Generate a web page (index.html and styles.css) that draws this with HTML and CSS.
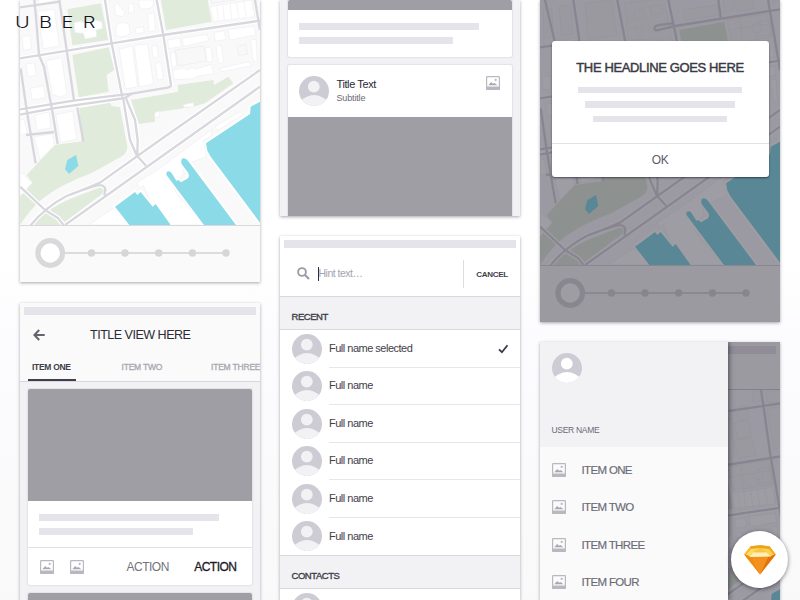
FILE: index.html
```html
<!DOCTYPE html>
<html lang="en">
<head>
<meta charset="utf-8">
<title>Uber wireframe kit</title>
<link rel="stylesheet" href="styles.css">
</head>
<body>
<svg class="defs" width="0" height="0" aria-hidden="true">
  <defs>
    <symbol id="avatar" viewBox="0 0 30 30">
      <clipPath id="round"><circle cx="15" cy="15" r="15"/></clipPath>
      <g clip-path="url(#round)">
        <rect width="30" height="30" fill="#cdccd4"/>
        <circle cx="14.8" cy="10.7" r="5.9" fill="currentColor"/>
        <path d="M0 26.500Q7 19 15 19T30 26.500V30H0Z" fill="currentColor"/>
      </g>
    </symbol>
    <symbol id="picture" viewBox="0 0 14 14">
      <rect x=".6" y=".6" width="12.800" height="12.500" rx=".6" fill="none" stroke="#b9b8c0" stroke-width="1.200"/>
      <rect x="0" y="10.500" width="14" height="3.500" rx=".8" fill="#b9b8c0"/>
      <path d="M2.300 9.200 5.200 6 7 7.800 8.400 6.900 11.500 9.200Z" fill="#a9a8b1"/>
      <circle cx="9.700" cy="3.900" r="1.100" fill="#b9b8c0"/>
    </symbol>
    <g id="city">
      <rect x="60" y="-300" width="720" height="980" fill="#f9f9fa"/>
      <g class="green">
        <path d="M202 28 303 10 325 120 217 136Z"/>
        <path d="M217 165 326 142 343 210 320 225 326 275 236 292Z"/>
        <path d="M478-30 613-55 635 65 498 90Z"/>
        <path d="M393 300 535 275 533 255 640 240 642 255 685 230 700 250 615 310 580 320 480 335 465 345V365L417 372Z"/>
        <path d="M238 325 330 308 335 318 360 322 382 440Q384 463 345 480L275 519Q190 550 135 590 95 620 60 675V590L97 548 80 525 165 435 245 424Z"/>
        <path d="M103 675Q135 630 210 597L290 566Q308 560 311 572 310 580 290 594L183 675Z"/>
      </g>
      <g class="block">
        <path d="M70-90 95-95 100-10 72-5ZM118-100 152-106 158-20 125-12ZM195-110 275-120 290-15 205 0ZM313-110 430-125 455-5 325 0Z" class="soft"/>
        <path d="M66 110 90 107 95 147 70 150ZM113 35 163 27 178 138 130 146ZM78 192 103 188 109 226 84 230ZM91 265 131 258 136 294 96 299ZM138 182 185 173 200 280 185 292 157 283ZM104 345 148 336 152 384 110 391ZM167 344 218 333 230 418 182 428ZM103 410 158 402 163 435 120 480ZM60 360 72 358 82 400 60 405ZM115 0 175-5 175 0 115 12Z"/>
        <path d="M222 68 245 63 248 68 285 60 305 65 308 85 288 90 290 110 255 117 250 100 225 98Z"/>
        <path d="M358 148 397 138 413 260 376 267ZM403 136 442 132 461 252 418 261ZM466 190 483 186 490 237 473 240ZM455 140 470 134 475 170 460 175Z"/>
        <path d="M416 0H460V15Q454 28 430 27L418 22ZM385 12 400 10 403 35 386 40ZM345 15 355 8 360 22 375 35 368 50 345 45ZM442 42 462 38 467 92 447 96ZM405 85 430 80 433 98 408 101Z"/>
        <path d="M350 75Q370 60 387 75L390 100Q375 115 350 108L347 90Z"/>
        <path d="M631 20 755 0 764 50 640 65ZM503 120 540 114 544 140 505 146ZM546 115 622 103 626 122 550 140ZM642 97 672 92 678 118 646 124ZM684 88 762 79 768 105 690 120ZM617 143 633 141 638 184 621 187ZM648 137 664 135 671 188 656 190ZM512 160 525 155 530 198 516 202ZM518 210 555 203 560 212 575 203 590 207 635 192 641 222 595 228 580 236 523 239ZM659 205 748 185 752 198 665 215ZM752 120 768 118 772 182 760 186Z"/>
        <path d="M526 150 611 138 618 183 535 198ZM712 138 738 134 743 162 716 167Z" class="soft"/>
        <path d="M650 15 655 62M668 12 673 60M690 8 695 58M710 6 716 54M731 2 738 52"/>
        <path d="M550 314 580 308 582 320 552 322ZM465 338 479 334V350L464 352ZM645 380 720 335 730 343 652 392Z"/>
        <path d="M480 505 620 400 638 388 630 410 610 422 620 470 565 490 550 473 540 480 552 520 532 545 505 510 495 515 530 580 608 675H515L467 610 458 620 430 555 420 565 410 548Z"/>
        <path d="M265 675 340 625 385 675ZM60 515 97 548 60 588Z"/>
        <path d="M642-240 675-246 682-205 650-198ZM692-290 715-295 720-260 697-255ZM640-190 660-200 685-194 690-152 650-145ZM640-140 693-148 704-95 650-86ZM735-285 780-292 780-255 742-250ZM738-235 780-241V-120L758-112ZM622-60 740-79 757-8 635 10ZM710-10 710-55 750-60 755-15ZM605-200 632-205 640-90 612-82ZM490-90 590-105 596-75 495-58Z" class="soft"/>
        <path d="M698-46 722-50 726-25 702-21ZM660-67 668 5M625-30 745-48" class="soft"/>
        <path d="M342-90 370-95 373-65 345-60ZM390-100 425-106 430-80 395-75ZM345-35 365-39 370-15 350-12Z" class="soft"/>
      </g>
      <g class="casing">
        <path d="M780 210 480 420 300 548Q275 560 200 588 130 625 85 680M780 260 195 675M370 298 390 420 410 466 438 497M378 295 405 360 413 420V466M60 560 135 630 175 655 190 675"/>
        <path d="M60 175 335 130 490 105 780 62M60 328 220 302 395 282M60 343 160 325 375 294M315 0 335 130 367 290M470 0 490 105 514 258"/>
      </g>
      <g class="water">
        <path d="M780 305 752 320 750 342 618 430 622 452 632 470 780 668Z"/>
        <path d="M345 620 405 576 412 585 422 576 458 620 467 612 512 675H388Z"/>
        <path d="M612 675 500 526Q496 514 507 514 513 516 517 523L529 542 535 540 543 547 564 535Q569 528 565 519L545 492Q540 475 552 475 560 476 566 485L708 675Z"/>
        <path d="M202 480 228 465 235 498 207 522 195 508Z"/>
      </g>
      <g class="road">
        <path d="M60 22 180 5M75-120 103 0 107 40 117 165 132 200 158 340 173 432M60-180 75-120M150-200 160-120 178 0 200 150 222 300M60 175 335 130 490 105 780 62M292-120 315 0 335 130 367 290"/>
        <path d="M445-120 470 0 490 105 513 255Q514 260 503 263L395 281 375 294M704-400 727-246 748-96 765 0 780 90"/>
        <path d="M60 328 220 302 395 281M60 344 160 325 375 294M62 205 80 330 100 450 107 490M78 405 162 396M232 322 250 425"/>
        <path d="M370 298 390 420 410 466 438 497M378 295 405 360 413 420 412 466M780 210 480 420 300 548Q275 560 200 588 135 622 90 678M780 260 195 675M240 573 285 558Q312 550 316 568L313 586M60 560 135 630 175 655 190 675"/>
        <path d="M465-42 780-92M595-120 602-68M623-228 780-251M465-42 415-30Q400-27 404-37 406-43 418-45L458-50"/>
      </g>
    </g>
  </defs>
</svg>

<div class="logo">UBER</div>

<main class="board">
  <div class="column">
    <section class="screen">
      <svg class="map" viewBox="60 0 720 675"><use href="#city"/></svg>
      <footer class="slider"><svg width="200" height="32" viewBox="0 0 200 32">
        <path d="M30 16H191" stroke="#dcdcde" stroke-width="2"/>
        <g fill="#d6d6d8"><circle cx="56.500" cy="16" r="3.700"/><circle cx="90" cy="16" r="3.700"/><circle cx="123.700" cy="16" r="3.700"/><circle cx="157.400" cy="16" r="3.700"/><circle cx="191" cy="16" r="3.700"/></g>
        <circle cx="15.200" cy="16" r="12.300" fill="#fff" stroke="#d9d9db" stroke-width="5.200"/>
      </svg></footer>
    </section>

    <section class="screen feed tabs-screen">
      <header class="topbar">
        <div class="status"></div>
        <div class="titlebar">
          <svg class="back" viewBox="0 0 12 12" fill="none" stroke="#64636f" stroke-width="2"><path d="M11.700 6H1.500M6.200 1 1.400 6 6.200 11"/></svg>
          <h1>TITLE VIEW HERE</h1>
        </div>
        <nav class="tabs"><a class="on"><span class="t1">ITEM ONE</span></a><a><span class="t2">ITEM TWO</span></a><a><span class="t3">ITEM THREE</span></a></nav>
      </header>
      <article class="card">
        <div class="photo"></div>
        <div class="copy"><i></i><i></i></div>
        <div class="actions">
          <svg class="pic"><use href="#picture"/></svg>
          <svg class="pic"><use href="#picture"/></svg>
          <span class="action first">ACTION</span>
          <span class="action strong">ACTION</span>
        </div>
      </article>
      <article class="card"><div class="photo"></div></article>
    </section>
  </div>

  <div class="column">
    <section class="screen feed feed-top">
      <article class="card cut"><div class="photo"></div><div class="copy"><i></i><i></i></div></article>
      <article class="card">
        <div class="person">
          <svg class="avatar"><use href="#avatar"/></svg>
          <div class="names"><b>Title Text</b><small>Subtitle</small></div>
          <svg class="pic"><use href="#picture"/></svg>
        </div>
        <div class="photo"></div>
      </article>
    </section>

    <section class="screen list">
      <div class="status"></div>
      <div class="search">
        <svg class="lens" viewBox="0 0 13 13" fill="none" stroke="#9d9ca4"><circle cx="5" cy="5" r="3.900" stroke-width="1.900"/><path d="M7.800 7.800 12 12" stroke-width="2.200"/></svg>
        <span class="hint"><span>Hint text…</span></span>
        <span class="cancel"><span>CANCEL</span></span>
      </div>
      <h2><span class="recent">RECENT</span></h2>
      <ul>
        <li><svg class="avatar"><use href="#avatar"/></svg><div><span class="sel">Full name selected</span><svg class="check" viewBox="0 0 11 10"><path d="M1 5.400 3.900 8.200 9.500 1.200" fill="none" stroke="#3a3944" stroke-width="1.800"/></svg></div></li>
        <li><svg class="avatar"><use href="#avatar"/></svg><div><span>Full name</span></div></li>
        <li><svg class="avatar"><use href="#avatar"/></svg><div><span>Full name</span></div></li>
        <li><svg class="avatar"><use href="#avatar"/></svg><div><span>Full name</span></div></li>
        <li><svg class="avatar"><use href="#avatar"/></svg><div><span>Full name</span></div></li>
        <li><svg class="avatar"><use href="#avatar"/></svg><div><span>Full name</span></div></li>
      </ul>
      <h2><span class="contacts">CONTACTS</span></h2>
      <ul><li><svg class="avatar"><use href="#avatar"/></svg><div></div></li></ul>
    </section>
  </div>

  <div class="column">
    <section class="screen modal-screen">
      <svg class="map tall" viewBox="60 -120 720 795"><use href="#city"/></svg>
      <footer class="slider"><svg width="200" height="32" viewBox="0 0 200 32">
        <path d="M30 16H191" stroke="#dcdcde" stroke-width="2"/>
        <g fill="#d6d6d8"><circle cx="56.500" cy="16" r="3.700"/><circle cx="90" cy="16" r="3.700"/><circle cx="123.700" cy="16" r="3.700"/><circle cx="157.400" cy="16" r="3.700"/><circle cx="191" cy="16" r="3.700"/></g>
        <circle cx="15.200" cy="16" r="12.300" fill="#fff" stroke="#d9d9db" stroke-width="5.200"/>
      </svg></footer>
      <div class="scrim"></div>
      <div class="dialog">
        <h3>THE HEADLINE GOES HERE</h3>
        <i></i><i></i><i></i>
        <button>OK</button>
      </div>
    </section>

    <section class="screen drawer-screen">
      <aside class="drawer">
        <div class="user"><svg class="avatar"><use href="#avatar"/></svg><span>USER NAME</span></div>
        <div class="entry"><svg class="pic"><use href="#picture"/></svg><span>ITEM ONE</span></div>
        <div class="entry"><svg class="pic"><use href="#picture"/></svg><span>ITEM TWO</span></div>
        <div class="entry"><svg class="pic"><use href="#picture"/></svg><span>ITEM THREE</span></div>
        <div class="entry"><svg class="pic"><use href="#picture"/></svg><span>ITEM FOUR</span></div>
      </aside>
      <div class="behind">
        <div class="behind-bar"><div class="behind-status"></div></div>
        <svg class="strip" viewBox="621 -291 159 630"><use href="#city"/></svg>
        <div class="scrim"></div>
      </div>
    </section>
  </div>
</main>

<div class="badge">
  <svg width="32" height="30" viewBox="0 0 32 30">
    <path d="M6.500 1.200 16 .2 25.500 1.200 31.800 9.500 16 29.500.2 9.500Z" fill="#f7a71c"/>
    <path d="M.2 9.500H7L16 29.500Z" fill="#ef8a12"/>
    <path d="M31.800 9.500H25L16 29.500Z" fill="#e0740d"/>
    <path d="M7 9.500H25L16 29.500Z" fill="#f39020"/>
    <path d="M6.500 1.200 16 .2 25.500 1.200 25 4.500 16 3.500 7 4.500Z" fill="#e9a41c"/>
    <path d="M7 4 16 3 6 11.500 2 9.500Z" fill="#fddc6c"/>
    <path d="M25 4 16 3 26 11.500 30 9.500Z" fill="#fcd053"/>
    <path d="M10 7 21 6.500 27 11.500 5.500 12Z" fill="#fff0b8"/>
    <path d="M9 6 16 3.500 22.500 6 21 7.500H10.500Z" fill="#f9c544"/>
    <path d="M6.500 1.200 7 4.500 2 9.500H.2Z" fill="#f9bf33"/>
    <path d="M25.500 1.200 25 4.500 30 9.500H31.800Z" fill="#f5ab25"/>
  </svg>
</div>
</body>
</html>
```

FILE: styles.css
```css
* { box-sizing: border-box; }
body {
  margin: 0;
  width: 800px;
  height: 600px;
  overflow: hidden;
  position: relative;
  background: linear-gradient(#fff 0, #fff 260px, #fcfcfe 330px, #f9f9fa 600px);
  font-family: "Liberation Sans", Arial, sans-serif;
  color: #3f3e49;
}
h1, h2, h3, ul { margin: 0; padding: 0; font-weight: 400; }
i { display: block; background: #e5e4ea; }
.defs { position: absolute; }
.green { fill: #e0ebdb; }
.block { fill: #fff; stroke: #efeff2; stroke-width: 2; }
.block .soft { fill: #f8f8f9; stroke: #ececf0; }
.casing { fill: none; stroke: #fff; stroke-width: 14; }
.water { fill: #8bdae7; stroke: #fff; stroke-width: 12; paint-order: stroke; }
.water path:last-child { stroke: none; }
.road { fill: none; stroke: #d8d7de; stroke-width: 7; stroke-linejoin: round; }

.logo {
  position: absolute;
  z-index: 5;
  left: 14.5px;
  top: 12px;
  font: 300 16px/20px Inter, sans-serif;
  letter-spacing: 7.5px;
  color: #15141f;
  transform: scaleX(1.25);
  transform-origin: 0 0;
}

.board { display: flex; gap: 20px; padding: 0 20px; height: 600px; }
.column { width: 240px; display: flex; flex-direction: column; gap: 20px; }
.column:first-child { gap: 21px; }
.screen {
  flex: none;
  width: 240px;
  overflow: hidden;
  position: relative;
  background: #fff;
  box-shadow: 0 1px 3px rgba(30, 28, 45, .38);
}
.map { display: block; width: 240px; height: 225px; }
.map.tall { height: 265px; }
.slider {
  height: 57px;
  background: #fafafa;
  border-top: 1px solid #d9d9dd;
  padding: 11px 0 0 15px;
}
.slider svg { display: block; }
.scrim { position: absolute; inset: 0; background: rgba(21, 18, 35, .41); }

.status { height: 8px; margin: 4px 4px 0; background: #e5e4ea; }
.feed { background: #f2f2f5; }
.tabs-screen { height: 310px; }
.topbar { height: 79px; background: #fafafa; border-bottom: 1px solid #d6d6dc; overflow: hidden; }
.titlebar { height: 38px; display: flex; align-items: center; padding-left: 13px; }
.back { width: 12px; height: 12px; margin-top: 1px; }
h1 { margin-left: 45px; font-size: 13.5px; letter-spacing: -.55px; white-space: nowrap; color: #2b2a35; transform: scaleX(.93); transform-origin: 0 50%; }
.tabs { display: flex; width: 300px; height: 28px; margin-left: 8px; }
.tabs a { flex: none; width: 89.5px; font-size: 8.5px; line-height: 28px; padding-left: 4px; color: #a9a8b0; white-space: nowrap; -webkit-text-stroke: .3px; }
.tabs .on { width: 48px; margin-right: 41.5px; font-weight: 700; -webkit-text-stroke: 0; color: #3f3e49; border-bottom: 2px solid #3f3e49; }
.t1 { letter-spacing: -.3px; }
.t2, .t3 { letter-spacing: -.2px; }

.card { width: 224px; margin: 7px auto 0; background: #fff; border-radius: 2px; overflow: hidden; box-shadow: 0 0 1px 1px #e2e2e7; }
.card + .card { margin-top: 8px; }
.photo { height: 112px; background: #9f9ea4; }
.copy { height: 46px; padding: 13px 11px 0; display: flex; flex-direction: column; gap: 7.500px; }
.copy i { height: 6.500px; width: 180px; }
.copy i + i { width: 153.500px; }
.actions { height: 38px; border-top: 1px solid #e2e2e6; display: flex; align-items: center; padding: 0 15.5px 0 12px; }
.pic { width: 14px; height: 14px; flex: none; }
.actions .pic + .pic { margin-left: 16px; }
.action { font-size: 12px; letter-spacing: -.5px; color: #73727c; }
.action.first { margin-left: 42.500px; }
.strong { margin-left: auto; color: #1b1a26; -webkit-text-stroke: .3px; }

.feed-top { height: 216px; }
.feed-top .card { margin-top: 0; }
.cut .copy { height: 47px; }
.feed-top .card + .card { margin-top: 8px; }
.cut .photo { height: 10px; }
.person { height: 52px; display: flex; padding: 11px 12px 0 11px; }
.avatar { width: 30px; height: 30px; flex: none; color: #f2f2f5; }
.names { flex: 1; padding: 1px 0 0 7.500px; }
.names b, .names small { display: block; font-weight: 400; }
.names b { font-size: 11px; line-height: 14px; letter-spacing: -.4px; color: #2b2a35; }
.names small { font-size: 9px; line-height: 15px; letter-spacing: -.15px; color: #6b6a75; }

.list { height: 364px; }
.search { height: 48px; display: flex; align-items: center; padding: 4px 0 0 16.5px; }
.lens { width: 13px; height: 13px; margin-top: -1px; }
.hint { margin-left: 8px; width: 145.5px; height: 14px; border-left: 1.500px solid #2b2a45; font-size: 10.5px; line-height: 13px; color: #a5a4ac; letter-spacing: -.5px; }
.cancel { flex: 1; height: 28px; line-height: 29px; border-left: 1px solid #dcdce2; text-align: center; font-size: 8px; font-weight: 700; letter-spacing: -.3px; }
h2 { height: 34px; background: #f2f2f5; border: solid #d9d9dd; border-width: 1px 0; padding: 13px 0 0 11.500px; font-size: 9.500px; line-height: 13px; -webkit-text-stroke: .35px; }
.recent, .contacts { letter-spacing: -.45px; }
ul { list-style: none; }
li { height: 37.500px; display: flex; align-items: center; padding-left: 11.500px; }
li div { flex: 1; height: 37.500px; margin-left: 7.500px; border-bottom: 1px solid #e7e7eb; font-size: 11px; line-height: 37px; letter-spacing: -.5px; display: flex; justify-content: space-between; align-items: center; }
li:last-child div { border: 0; }
.check { width: 11px; height: 10px; margin: 2px 11px 0 0; }

.modal-screen { height: 322px; }
.dialog { position: absolute; left: 11.500px; top: 41px; width: 217px; height: 136px; background: #fff; border-radius: 3px; box-shadow: 0 1px 2px rgba(20, 18, 35, .6); display: flex; flex-direction: column; align-items: center; }
h3 { margin: 19px 0 10.500px; font-size: 13px; line-height: 16px; letter-spacing: -.37px; white-space: nowrap; color: #3a3944; -webkit-text-stroke: .45px; }
.dialog i { width: 164px; height: 6.500px; margin-bottom: 8px; }
.dialog i + i { width: 150px; }
.dialog i + i + i { width: 134.500px; }
button { width: 100%; margin-top: auto; height: 34px; border: 0; border-top: 1px solid #e2e2e6; background: none; padding: 0; font: 12px/33px "Liberation Sans", Arial, sans-serif; letter-spacing: -.5px; color: #5d5c67; }

.drawer-screen { height: 258px; display: flex; }
.drawer { width: 187.500px; background: #fafafa; position: relative; z-index: 1; box-shadow: 1px 0 5px rgba(20, 18, 35, .6); }
.user { height: 105px; background: #f2f2f5; padding: 11px 11.500px; display: flex; flex-direction: column; margin-bottom: 4px; }
.user .avatar { color: #fff; }
.user span { margin-top: 41px; font-size: 8.500px; line-height: 13px; letter-spacing: -.3px; color: #6b6a75; }
.entry { height: 37.500px; display: flex; align-items: center; padding-left: 12px; font-size: 11.500px; letter-spacing: -.65px; color: #6b6a75; }
.entry span { margin-left: 15.500px; -webkit-text-stroke: .15px; }
.behind { width: 52.500px; position: relative; }
.behind-bar { height: 48px; padding: 4px 4px 0 0; background: #fafafa; border-bottom: 1px solid #d0d0d6; }
.behind-status { height: 7.500px; background: #e5e4ea; }
.strip { display: block; width: 53px; height: 210px; }

.badge { position: absolute; z-index: 5; left: 731px; top: 531px; width: 57px; height: 57px; border-radius: 50%; background: #fff; box-shadow: 0 1px 4px rgba(20, 18, 35, .55); display: flex; align-items: center; justify-content: center; }
```
